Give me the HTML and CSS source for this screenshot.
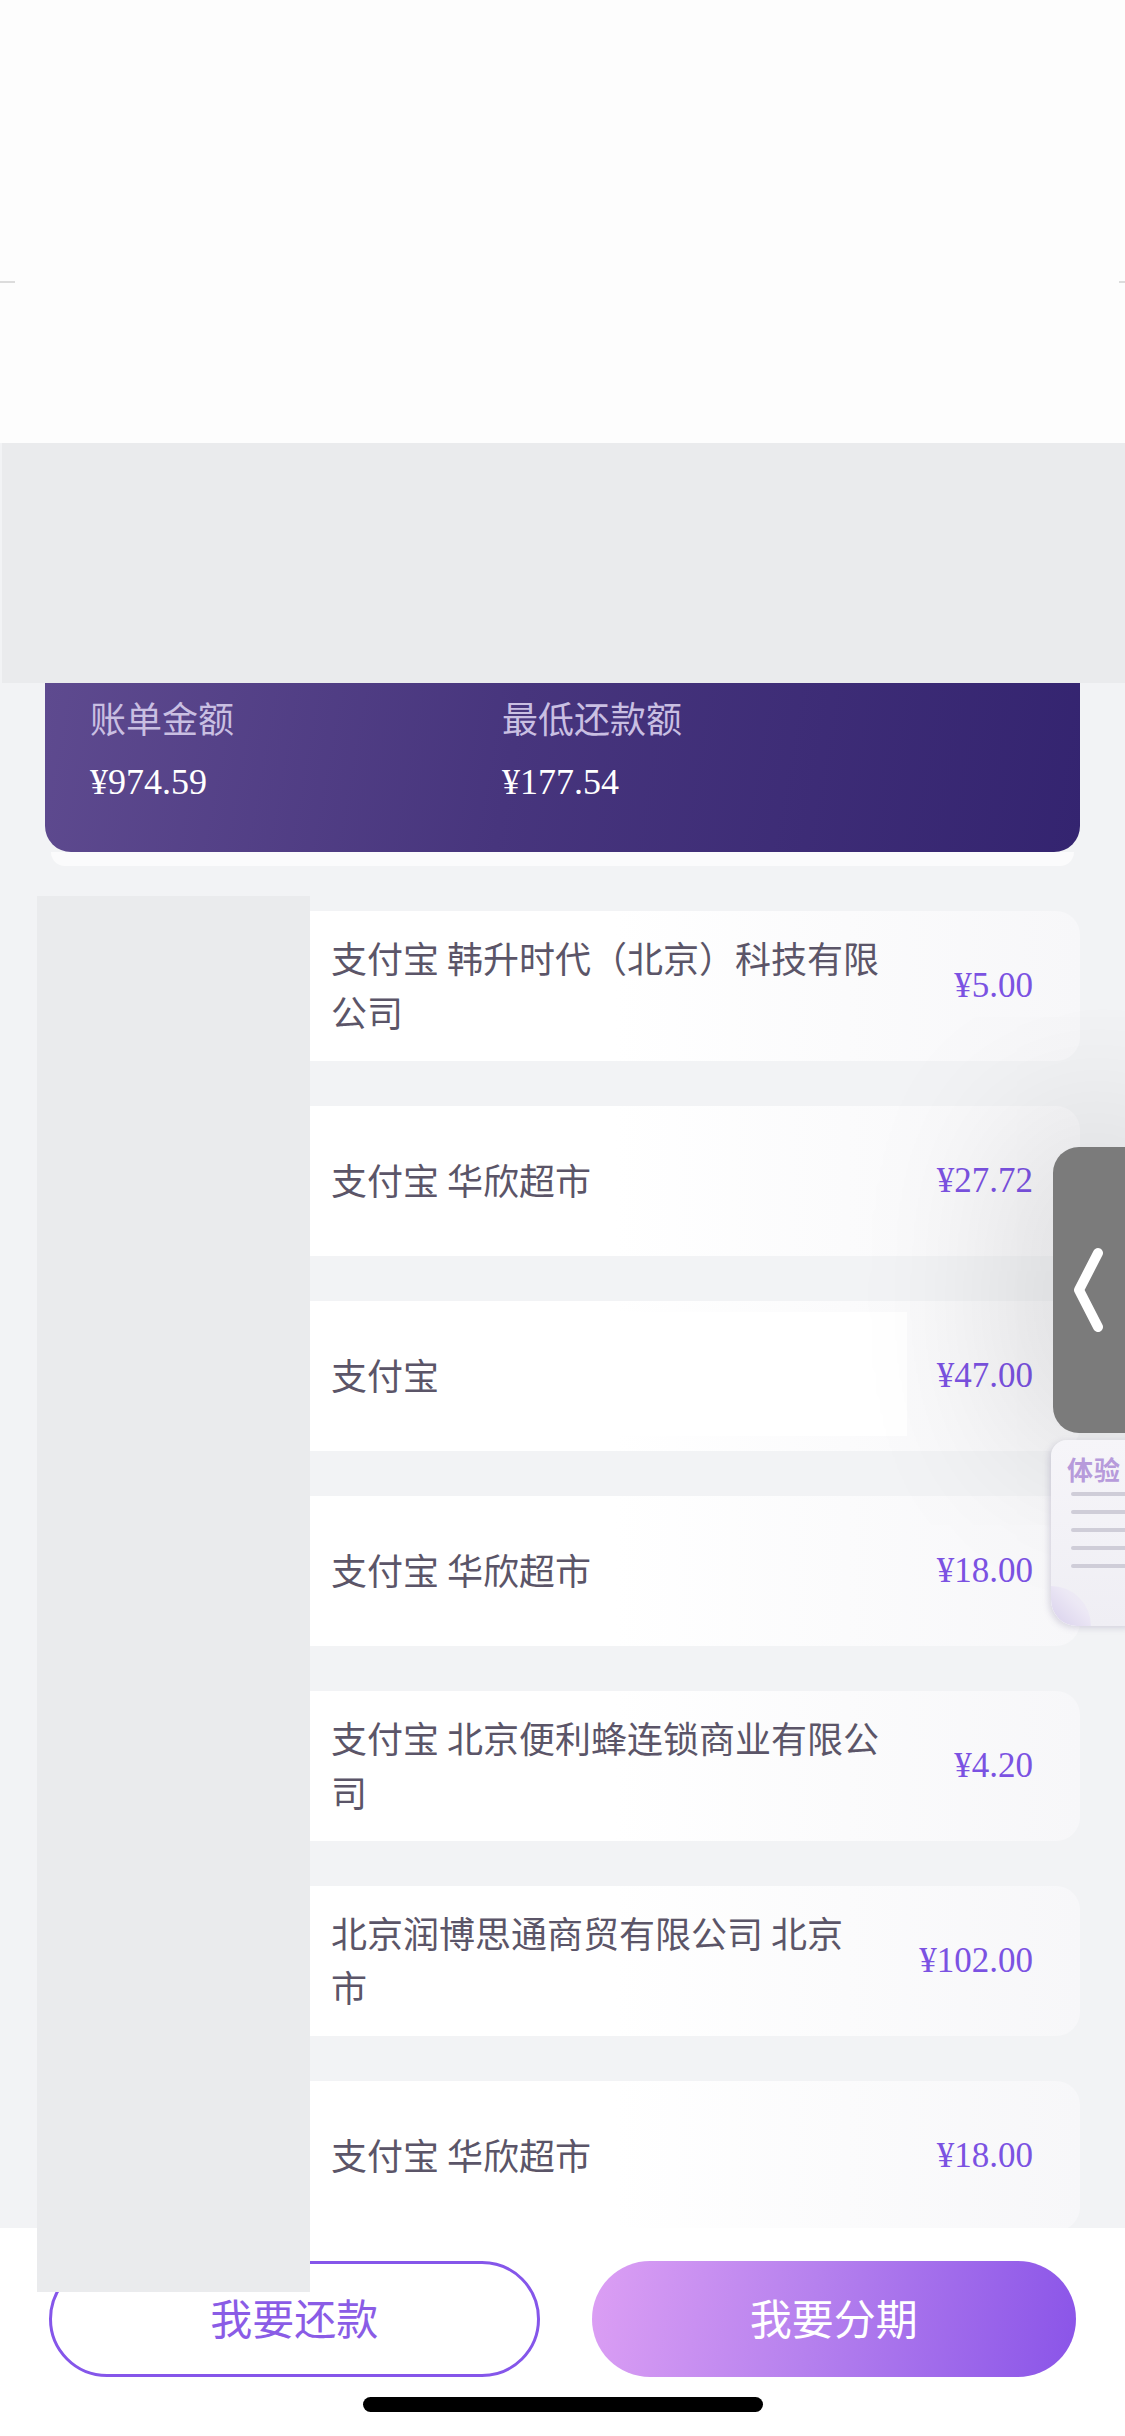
FILE: index.html
```html
<!DOCTYPE html>
<html lang="zh-CN">
<head>
<meta charset="utf-8">
<title>账单详情</title>
<link rel="stylesheet" href="styles.css">
</head>
<body>
<div class="page">
  <main class="content">
    <header class="top">
      <div class="top-line"><span class="seg seg-l"></span><span class="seg seg-r"></span></div>
    </header>
    <div class="mask-top"></div>
    <section class="bill">
      <div class="bill-item">
        <div class="bill-label">账单金额</div>
        <div class="bill-value">¥974.59</div>
      </div>
      <div class="bill-item">
        <div class="bill-label">最低还款额</div>
        <div class="bill-value">¥177.54</div>
      </div>
    </section>
    <div class="bill-under"></div>
    <ul class="tx-list">
      <li class="tx"><span class="tx-name">支付宝 韩升时代（北京）科技有限公司</span><span class="tx-amt">¥5.00</span></li>
      <li class="tx"><span class="tx-name">支付宝 华欣超市</span><span class="tx-amt">¥27.72</span></li>
      <li class="tx tx-masked"><span class="tx-name">支付宝</span><span class="tx-amt">¥47.00</span></li>
      <li class="tx"><span class="tx-name">支付宝 华欣超市</span><span class="tx-amt">¥18.00</span></li>
      <li class="tx"><span class="tx-name">支付宝 北京便利蜂连锁商业有限公司</span><span class="tx-amt">¥4.20</span></li>
      <li class="tx"><span class="tx-name">北京润博思通商贸有限公司 北京市</span><span class="tx-amt">¥102.00</span></li>
      <li class="tx"><span class="tx-name">支付宝 华欣超市</span><span class="tx-amt">¥18.00</span></li>
    </ul>
  </main>
  <footer class="footer">
    <div class="actions">
      <button class="btn btn-outline">我要还款</button>
      <button class="btn btn-fill">我要分期</button>
    </div>
    <div class="home-ind"></div>
  </footer>
  <div class="mask-left"></div>
  <div class="float-tab">
    <svg class="chev" width="72" height="286" viewBox="0 0 72 286">
      <path d="M45 106 L26 143 L45 180" fill="none" stroke="#ffffff" stroke-width="10" stroke-linecap="round" stroke-linejoin="round"/>
    </svg>
  </div>
  <div class="float-card">
    <div class="fc-title">体验</div>
    <div class="fc-lines"><span></span><span></span><span></span><span></span><span></span></div>
    <div class="fc-curl"></div>
  </div>
</div>
</body>
</html>
```

FILE: styles.css
```css
* { box-sizing: border-box; }
html, body { margin: 0; padding: 0; }
body {
  width: 1125px;
  height: 2436px;
  overflow: hidden;
  background: #f2f3f5;
  font-family: "Noto Sans CJK SC", "Noto Sans", sans-serif;
}
.page {
  position: relative;
  width: 1125px;
  height: 2436px;
  display: flex;
  flex-direction: column;
}
.content {
  flex: 1;
  overflow: hidden;
  background: #f2f3f5;
}
.top {
  height: 443px;
  padding-top: 281px;
  background: #fdfdfd;
}
.top-line {
  display: flex;
  justify-content: space-between;
  height: 2px;
}
.seg { display: block; height: 2px; background: #dcdcdc; }
.seg-l { width: 15px; }
.seg-r { width: 6px; }
.mask-top {
  height: 240px;
  margin-left: 2px;
  background: #eaebed;
}
.bill {
  margin: 0 45px;
  height: 169px;
  padding: 7px 45px 0;
  display: grid;
  grid-template-columns: 412px 1fr;
  background: linear-gradient(100deg, #5e4a8f 0%, #47357d 45%, #342470 100%);
  border-radius: 0 0 26px 26px;
}
.bill-item {
  display: flex;
  flex-direction: column;
  gap: 11px;
}
.bill-label {
  font-size: 36px;
  line-height: 54px;
  color: #c9bfe2;
}
.bill-value {
  font-family: "Liberation Serif", "Times New Roman", serif;
  font-size: 36px;
  line-height: 54px;
  color: #ffffff;
}
.bill-under {
  margin: 0 51px;
  height: 14px;
  background: #fbfbfc;
  border-radius: 0 0 20px 20px;
}
.tx-list {
  list-style: none;
  margin: 45px 0 0;
  padding: 0;
  display: flex;
  flex-direction: column;
  gap: 45px;
}
.tx {
  position: relative;
  margin: 0 45px;
  height: 150px;
  padding: 0 47px 0 286px;
  display: flex;
  align-items: center;
  gap: 48px;
  background: linear-gradient(90deg, #ffffff 55%, #f7f7f9 100%);
  border-radius: 24px;
}
.tx-name {
  position: relative;
  z-index: 1;
  flex: 1;
  min-width: 0;
  padding-bottom: 5px;
  font-size: 36px;
  line-height: 54px;
  color: #5b5568;
}
.tx-amt {
  position: relative;
  z-index: 1;
  flex: none;
  white-space: nowrap;
  font-family: "Liberation Serif", "Times New Roman", serif;
  font-size: 35px;
  line-height: 54px;
  color: #7b52e2;
}
.tx-masked::before {
  content: "";
  position: absolute;
  left: 265px;
  top: 11px;
  width: 597px;
  height: 124px;
  background: #ffffff;
}
.footer {
  height: 208px;
  padding-top: 33px;
  background: #ffffff;
}
.actions {
  display: flex;
  gap: 52px;
  padding: 0 49px;
}
.btn {
  flex: 1;
  height: 116px;
  border-radius: 58px;
  font-family: "Noto Sans CJK SC", sans-serif;
  font-size: 42px;
  line-height: 1;
  padding: 0 0 5px;
}
.btn-outline {
  background: #ffffff;
  border: 3px solid #8556ea;
  color: #8a5ce6;
}
.btn-fill {
  border: none;
  color: #ffffff;
  background: linear-gradient(100deg, #dc9ff4 0%, #b681ee 45%, #8a54e8 100%);
}
.home-ind {
  width: 400px;
  height: 15px;
  margin: 20px auto 0;
  background: #000000;
  border-radius: 8px;
}
.mask-left {
  position: absolute;
  left: 37px;
  top: 896px;
  width: 273px;
  height: 1396px;
  background: #eaebed;
  z-index: 6;
}
.float-tab {
  position: absolute;
  left: 1053px;
  top: 1147px;
  width: 80px;
  height: 286px;
  background: #7b7b7b;
  border-radius: 26px 0 0 26px;
  box-shadow: 0 0 170px 30px rgba(0, 0, 0, 0.14);
  z-index: 4;
}
.chev { display: block; }
.float-card {
  position: absolute;
  left: 1051px;
  top: 1440px;
  width: 80px;
  height: 186px;
  background: linear-gradient(180deg, #f6f5f9 0%, #efeef4 100%);
  border-radius: 16px 0 0 26px;
  box-shadow: -2px 2px 6px rgba(120, 110, 150, 0.25);
  padding: 14px 0 0 16px;
  z-index: 5;
  overflow: hidden;
}
.fc-title {
  font-size: 26px;
  line-height: 30px;
  font-weight: 700;
  color: #b79bdb;
  letter-spacing: 1px;
}
.fc-lines {
  display: flex;
  flex-direction: column;
  gap: 14px;
  margin-top: 8px;
}
.fc-lines span {
  display: block;
  height: 4px;
  margin-left: 4px;
  background: #cfcdd8;
  border-radius: 2px;
}
.fc-curl {
  position: absolute;
  left: 0;
  bottom: 0;
  width: 40px;
  height: 40px;
  background: linear-gradient(45deg, #d8d0ec 0%, #ece8f5 60%, rgba(239,238,244,0) 100%);
  border-radius: 0 40px 0 26px;
}
```
